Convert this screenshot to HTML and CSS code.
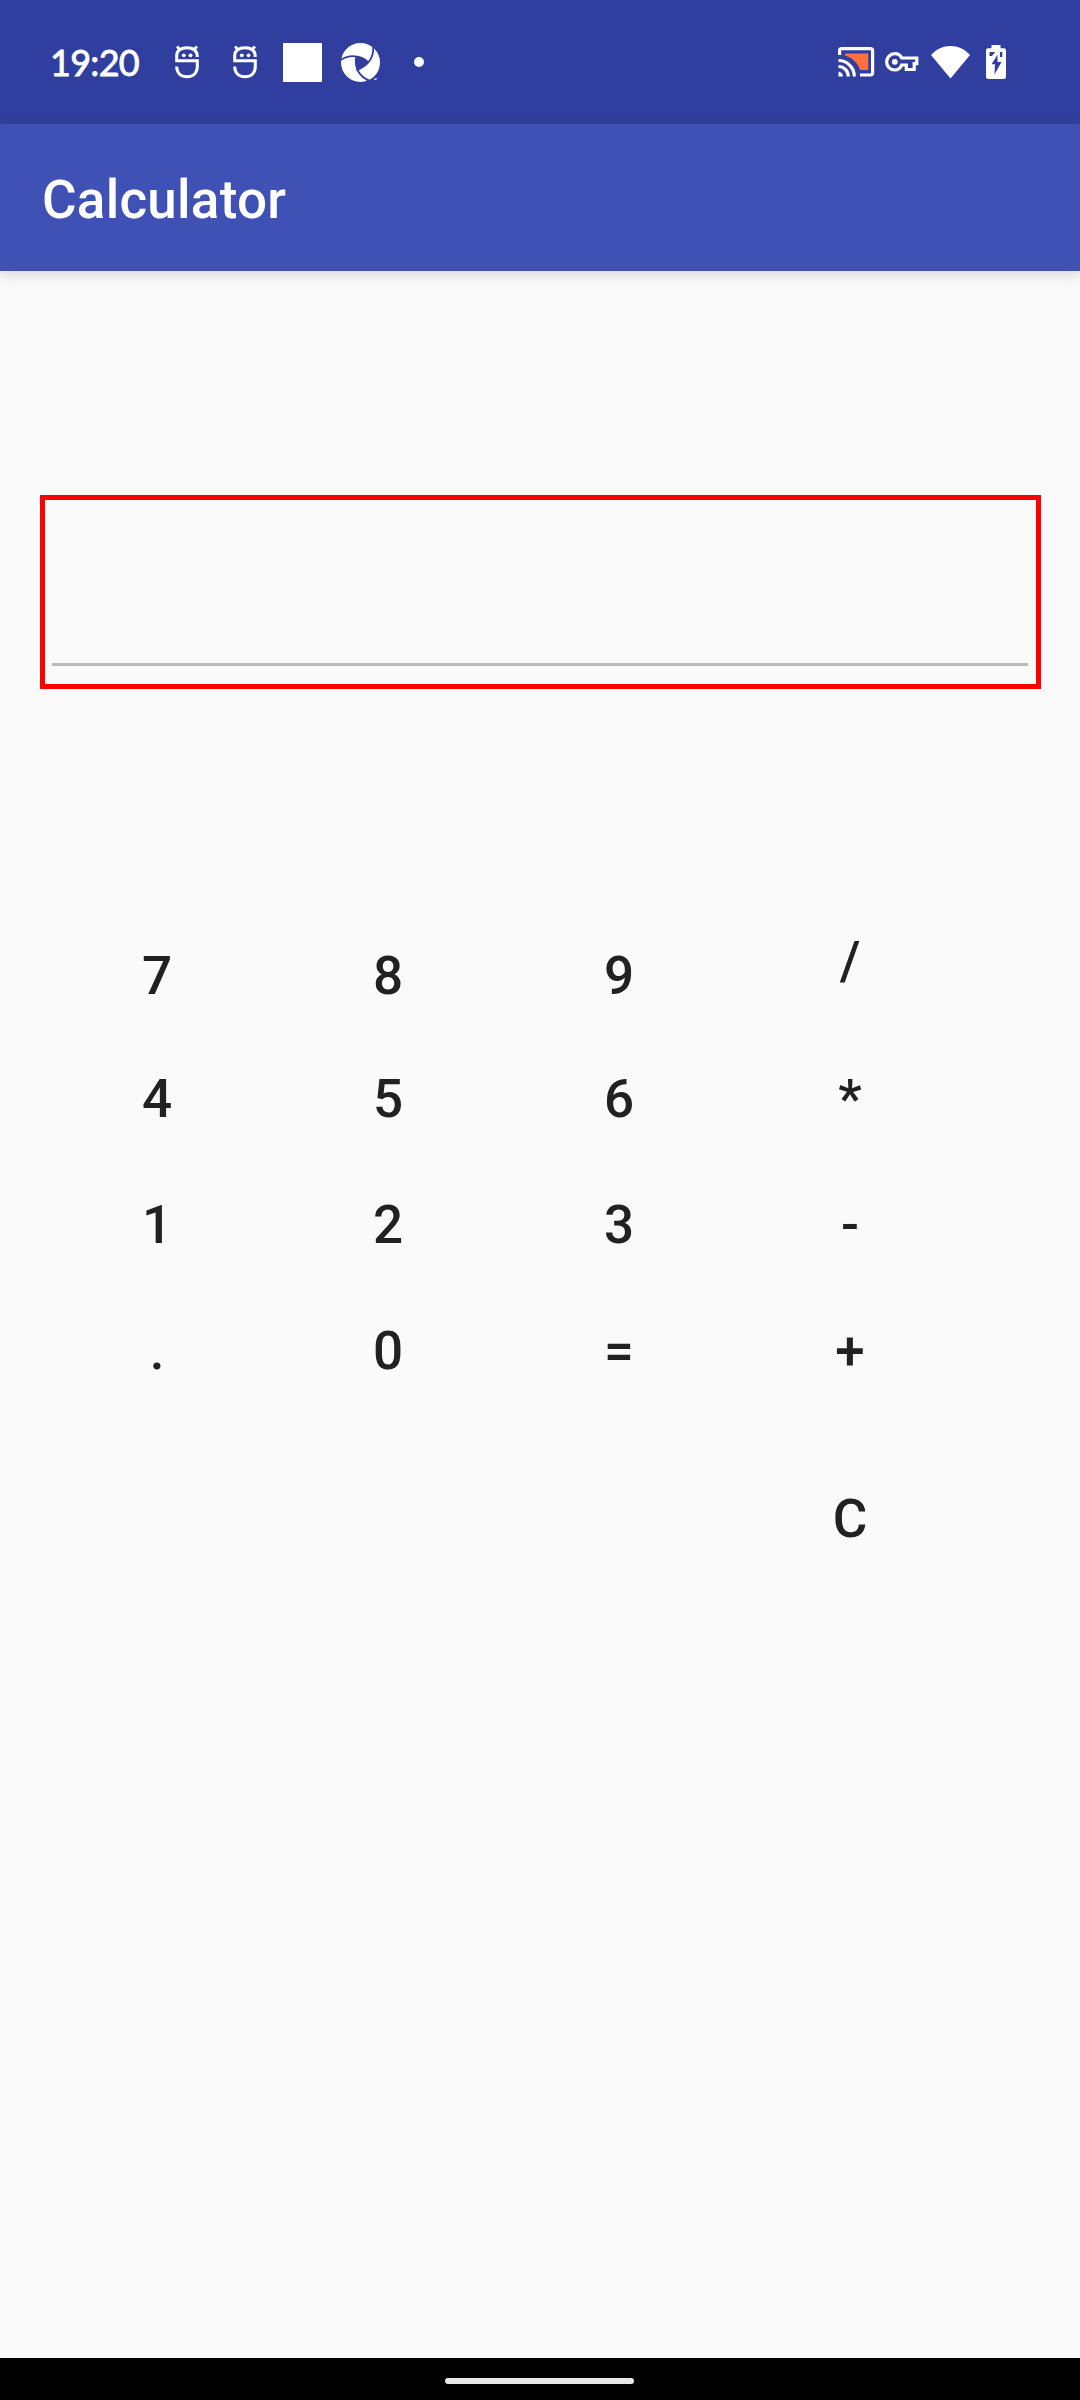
FILE: index.html
```html
<!DOCTYPE html>
<html lang="en">
<head>
<meta charset="utf-8">
<title>Calculator</title>
<link rel="stylesheet" href="styles.css">
</head>
<body>
<div class="screen">
  <header class="status-bar">
    <span class="clock">19:20</span>
    <div class="notifications">
      <svg class="robot" viewBox="0 0 24 34" fill="none" stroke="currentColor" stroke-width="3">
        <path d="M1.700 17.200V10.500C1.700 5.500 6 2.800 12 2.800S22.300 5.500 22.300 12M6 5.500L2 1.500M18 5.500L22 1.500M1.700 15.800H22.300V21.500C22.300 28.200 18 31.800 12 31.800S1.700 28.200 1.700 21.500"/>
        <circle cx="8.800" cy="10.300" r="1.900" fill="currentColor" stroke="none"/>
        <circle cx="15.500" cy="10.300" r="1.900" fill="currentColor" stroke="none"/>
      </svg>
      <svg class="robot" viewBox="0 0 24 34" fill="none" stroke="currentColor" stroke-width="3">
        <path d="M1.700 17.200V10.500C1.700 5.500 6 2.800 12 2.800S22.300 5.500 22.300 12M6 5.500L2 1.500M18 5.500L22 1.500M1.700 15.800H22.300V21.500C22.300 28.200 18 31.800 12 31.800S1.700 28.200 1.700 21.500"/>
        <circle cx="8.800" cy="10.300" r="1.900" fill="currentColor" stroke="none"/>
        <circle cx="15.500" cy="10.300" r="1.900" fill="currentColor" stroke="none"/>
      </svg>
      <span class="block"></span>
      <svg class="aperture" viewBox="0 0 39 39">
        <circle cx="19.500" cy="19.500" r="19.500" fill="currentColor"/>
        <g class="aperture-gaps">
          <path d="M0 17C6 12.500 17 10.500 27.500 19.300"/>
          <path d="M32 3C33 10 31 15 27.500 19.300C24 23.500 20 25.500 15.500 27.500"/>
          <path d="M29 38C19 34 13.500 26 15 13.500"/>
          <path class="aperture-hole" d="M15.500 13.200C20.500 13.200 24 15.500 27.500 18.800C24 23.500 20 25.800 15.800 27C14.300 22 14.300 18 15.500 13.200Z"/>
          <path class="aperture-hole" d="M25 37.500C29 37.300 31.500 35.500 34 33.500L35 39H25Z"/>
        </g>
        <path d="M33.500 35.400H36.700L34.800 36.700H33Z" fill="currentColor"/>
      </svg>
      <span class="more-dot"></span>
    </div>
    <div class="system-icons">
      <svg class="cast" viewBox="0 0 37 30" fill="none" stroke="currentColor" stroke-width="3.200">
        <path d="M7 6.500H30.200V23H22C20 16 14 10.500 7 8.500Z" fill="#ff7043" stroke="none"/>
        <path d="M1.600 8V3.600Q1.600 1.600 3.600 1.600H32.400Q34.600 1.600 34.600 3.600V25.800Q34.600 28 32.400 28H22"/>
        <path d="M.5 13.500C9 13.500 16.300 20.500 16.300 29.500M.5 19.500C6 19.500 10.300 24 10.300 29.500"/>
        <path d="M.5 24.800C3 24.800 4.900 27 4.900 29.500H.5Z" fill="currentColor" stroke="none"/>
      </svg>
      <svg class="key" viewBox="0 0 34 20" fill="none" stroke="currentColor" stroke-width="3.200">
        <path d="M16.800 6H31.800V11.700H29.200V17.500H21.300V13H16.600C15.500 16.200 12.800 18 9.800 18C5.200 18 1.600 14.300 1.600 9.800S5.200 1.600 9.800 1.600C12.800 1.600 15.500 3.200 16.800 6Z"/>
        <circle cx="9.800" cy="9.800" r="2.900" fill="currentColor" stroke="none"/>
      </svg>
      <svg class="wifi" viewBox="0 0 39 33" fill="currentColor">
        <path d="M0 9C5.500 3 12 0 19.500 0S33.500 3 39 9L19.500 32.500Z"/>
      </svg>
      <svg class="battery" viewBox="0 0 20 34" fill="currentColor">
        <path fill-rule="evenodd" d="M5.500 0H14.500V3.300H17.800Q20 3.300 20 5.500V31.800Q20 34 17.800 34H2.200Q0 34 0 31.800V5.500Q0 3.300 2.200 3.300H5.500ZM11.500 9.800L5.500 19.200H9L8.500 29.500L15.500 17H11.500ZM3.500 7V11H6L9.200 7ZM14 7V12H16.300V7Z"/>
      </svg>
    </div>
  </header>
  <div class="app-bar"><h1 class="title">Calculator</h1></div>
  <main class="content">
    <div class="display"></div>
    <div class="keypad">
      <button class="pad-key">7</button><button class="pad-key">8</button><button class="pad-key">9</button><button class="pad-key divide">/</button>
      <button class="pad-key">4</button><button class="pad-key">5</button><button class="pad-key">6</button><button class="pad-key">*</button>
      <button class="pad-key">1</button><button class="pad-key">2</button><button class="pad-key">3</button><button class="pad-key">-</button>
      <button class="pad-key">.</button><button class="pad-key">0</button><button class="pad-key">=</button><button class="pad-key">+</button>
      <button class="pad-key clear">C</button>
    </div>
  </main>
  <footer class="nav-bar"><span class="nav-handle"></span></footer>
</div>
</body>
</html>
```
FILE: styles.css
```css
* { box-sizing: border-box; }

body {
  margin: 0;
  font-family: Roboto, sans-serif;
  background: #fafafa;
}

.screen {
  display: flex;
  flex-direction: column;
  width: 1080px;
  height: 2400px;
  overflow: hidden;
}

.status-bar {
  display: flex;
  align-items: center;
  flex: none;
  height: 124px;
  padding: 0 74px 0 50px;
  background: #303f9f;
  color: #fff;
}

.status-bar svg { display: block; flex: none; }

.clock {
  width: 125px;
  font: 400 36px/44px Lato, sans-serif;
  letter-spacing: -.7px;
  -webkit-text-stroke: .8px #fff;
  white-space: nowrap;
}

.notifications { display: flex; align-items: center; }

.robot { width: 24px; height: 34px; margin-right: 34px; }
.robot + .robot { margin-right: 26px; }
.block { width: 39px; height: 39px; margin-right: 19px; background: #fff; }
.aperture { width: 39px; height: 39px; margin-right: 34px; }
.aperture-gaps { fill: none; stroke: #303f9f; stroke-width: 1.7; }
.aperture-hole { fill: #303f9f; stroke: none; }
.more-dot { width: 10px; height: 10px; border-radius: 50%; background: #fff; }

.system-icons { display: flex; align-items: center; margin-left: auto; }

.cast { width: 37px; height: 30px; margin-right: 10px; }
.key { width: 34px; height: 20px; margin-right: 12px; }
.wifi { width: 39px; height: 33px; margin-right: 16px; }
.battery { width: 20px; height: 34px; }

.app-bar {
  display: flex;
  align-items: center;
  flex: none;
  height: 147px;
  padding: 4px 42px 0;
  background: #3f51b5;
  box-shadow: 0 4px 12px rgba(0, 0, 0, .14);
}

.title {
  margin: 0;
  font-size: 53px;
  font-weight: 500;
  line-height: 62px;
  letter-spacing: .25px;
  color: #fff;
}

.content { flex: 1; padding: 224px 39px 0 40px; }

.display {
  height: 194px;
  padding: 0 8px 18px 7px;
  border: 5px solid #f00;
}

.display::after {
  content: "";
  display: block;
  height: 163px;
  border-bottom: 3px solid #b9bbba;
}

.keypad {
  display: grid;
  grid-template-columns: repeat(4, 231px);
  grid-template-rows: 120px repeat(3, 126px) 168px;
  margin: 227px 0 0 1.5px;
}

.pad-key {
  padding: 0;
  border: 0;
  background: none;
  font: 500 53px/62px Roboto, sans-serif;
  color: #212121;
}

.divide { padding-bottom: 30px; }
.clear { grid-column: 4; padding-top: 41px; }

.nav-bar {
  display: flex;
  align-items: center;
  justify-content: center;
  flex: none;
  height: 42px;
  padding: 4px 2px 0 0;
  background: #000;
}

.nav-handle { width: 189px; height: 6px; border-radius: 3px; background: #e8e8e8; }
```
